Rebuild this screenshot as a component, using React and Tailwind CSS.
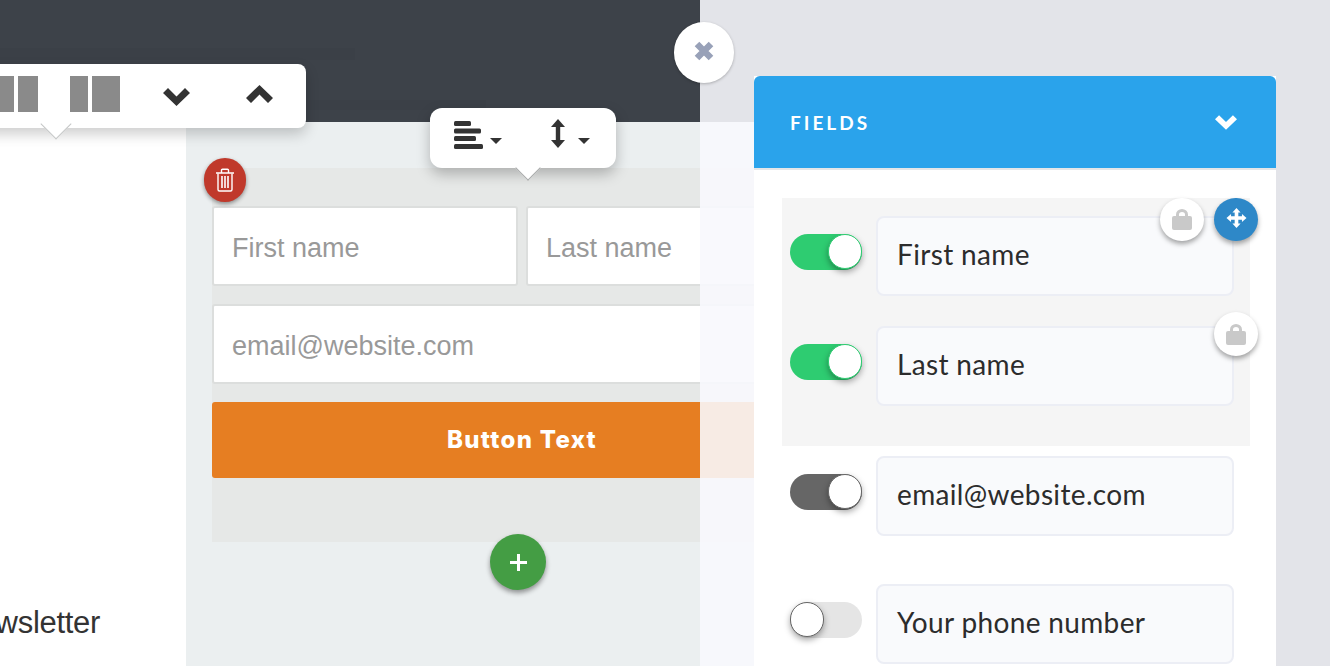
import React from 'react';

const Caret = () => (
  <svg width="12" height="6" viewBox="0 0 12 6" className="fill-[#333]">
    <path d="M0 0h12L6 6z" />
  </svg>
);

const AlignIcon = () => (
  <svg width="29" height="28" viewBox="0 0 29 28" className="fill-[#333]">
    <rect x="0" y="0" width="17" height="5" rx="1.5" />
    <rect x="0" y="7.5" width="27" height="5" rx="1.5" />
    <rect x="0" y="15" width="22" height="5" rx="1.5" />
    <rect x="0" y="23" width="29" height="5" rx="1.5" />
  </svg>
);

const ResizeIcon = () => (
  <svg width="14" height="29" viewBox="0 0 14 29" className="fill-[#333]">
    <path d="M7 0l7 8H9.200v13H14l-7 8-7-8h4.800V8H0z" />
  </svg>
);

const Chevron = ({ up = false, className = '', width = 27, height = 18 }) => (
  <svg width={width} height={height} viewBox="0 0 27 18" className={className}>
    <path d={up ? 'M0 13L13.500 0 27 13l-5 5-8.500-8.500L5 18z' : 'M0 5l5-5 8.500 8.500L22 0l5 5-13.500 13z'} fill="currentColor" />
  </svg>
);

const LockIcon = () => (
  <svg width="20" height="21" viewBox="0 0 20 21">
    <path d="M5.500 8V5.500a4.500 4 0 0 1 9 0V8" fill="none" stroke="#c9c9c9" strokeWidth="3" />
    <rect x="0" y="7" width="20" height="14" rx="2" fill="#c9c9c9" />
  </svg>
);

const MoveIcon = () => (
  <svg width="21" height="20" viewBox="0 0 22 22" className="mb-[3px] fill-white">
    <path d="M11 0l4.500 5H13v4h4V6.500l5 4.500-5 4.500V13h-4v4h2.500L11 22l-4.500-5H9v-4H5v2.500L0 11l5-4.500V9h4V5H6.500z" />
  </svg>
);

const TrashIcon = () => (
  <svg width="20" height="24" viewBox="0 0 20 24" fill="none" stroke="#fff" strokeWidth="1.4">
    <path d="M1 5h18M6.500 5V2.200q0-1 1-1h5q1 0 1 1V5" />
    <path d="M3 5.500v16q0 1.500 1.500 1.500h11q1.500 0 1.500-1.500v-16" />
    <path d="M7 8v12M10 8v12M13 8v12" strokeWidth="1.600" />
  </svg>
);

const Toggle = ({ state }) => {
  const track = state === 'on' ? 'bg-[#2ecc71] justify-end' : state === 'dark' ? 'bg-[#666666] justify-end' : 'bg-[#e5e5e5] justify-start';
  const knob = state === 'on' ? 'border-[#2ecc71]' : 'border-[#666666]';
  return (
    <div className={`mb-2 flex h-9 w-[72px] shrink-0 rounded-full ${track}`}>
      <div className={`h-[35px] w-[34px] rounded-full border bg-white shadow-[0_3px_6px_rgba(0,0,0,0.35)] ${knob}`} />
    </div>
  );
};

const FieldRow = ({ state, label, className = '', children }) => (
  <div className={`flex items-center gap-[14px] ${className}`}>
    <Toggle state={state} />
    <div className="relative flex h-20 w-[358px] items-center rounded-lg border-2 border-[#eceef5] bg-[#f9fafc] pb-[5px] pl-[19px] font-['Lato',sans-serif] text-[28px] tracking-[0.35px] text-[#2c2c2c]">
      {label}
      {children}
    </div>
  </div>
);

const RoundBadge = ({ className, children }) => (
  <div className={`absolute flex w-11 items-center justify-center rounded-full shadow-[0_3px_5px_rgba(0,0,0,0.35)] ${className}`}>
    {children}
  </div>
);

const TextInput = ({ className = '', children }) => (
  <div className={`flex h-20 items-center rounded-[3px] border-2 border-[#dcdedd] bg-white pl-[18px] pt-1 text-[27px] text-[#999] ${className}`}>
    {children}
  </div>
);

export default function App() {
  return (
    <div className="relative h-[666px] w-[1330px] overflow-hidden bg-[#3d4249] font-['Liberation_Sans',Arial,sans-serif]">
      {/* page under the editor */}
      <div className="flex h-full w-[754px] flex-col">
        {/* dark header, the blurred bands are what is left of its text */}
        <div className="h-[122px] shrink-0 pt-12">
          <div className="h-3 w-[355px] bg-black/[0.02]" />
          <div className="mt-10 h-[10px] w-[486px] bg-black/[0.02]" />
        </div>
        <div className="flex min-h-0 flex-1">
          <div className="flex w-[186px] shrink-0 items-end justify-end bg-white pb-[25px] pr-[86px]">
            <span className="whitespace-nowrap text-[31px] leading-9 tracking-[-0.3px] text-[#333]">Newsletter</span>
          </div>
          <div className="min-w-0 flex-1 overflow-hidden bg-[#ebeff0] pl-[26px] pt-[46px]">
            <div className="flex h-[374px] w-[620px] flex-col gap-[18px] bg-[#e6e8e7] pt-[38px]">
              <div className="flex gap-2">
                <TextInput className="w-[306px]">First name</TextInput>
                <TextInput className="w-[306px]">Last name</TextInput>
              </div>
              <TextInput>email@website.com</TextInput>
              <div className="flex h-[76px] items-center justify-center rounded-[3px] bg-[#e67e22] pb-px font-['Inter',sans-serif] text-[24px] font-extrabold tracking-[1.3px] text-white">
                Button Text
              </div>
            </div>
          </div>
        </div>
      </div>

      {/* column toolbar */}
      <div className="absolute left-[-20px] top-16 flex h-16 w-[326px] items-start rounded-lg bg-white pt-3 shadow-[0_6px_14px_rgba(0,0,0,0.2)]">
        <div className="ml-5 flex h-9 gap-1">
          <div className="w-[14px] bg-[#8a8a8a]" />
          <div className="w-5 bg-[#8a8a8a]" />
        </div>
        <div className="ml-8 flex h-9 gap-1">
          <div className="w-[18px] bg-[#8a8a8a]" />
          <div className="w-7 bg-[#8a8a8a]" />
        </div>
        <Chevron className="ml-[43px] mt-3 text-[#333]" />
        <Chevron up className="ml-[56px] mt-[9px] text-[#333]" />
      </div>
      <div className="absolute left-[45px] top-[113px] h-[22px] w-[22px] rotate-45 border-b border-r border-[#c4c6c6] bg-white" />

      {/* align toolbar */}
      <div className="absolute left-[430px] top-[108px] flex h-[60px] w-[186px] items-start rounded-xl bg-white pl-6 pt-[13px] shadow-[0_6px_14px_rgba(0,0,0,0.25)]">
        <AlignIcon />
        <div className="ml-[7px] mt-[17px] flex"><Caret /></div>
        <div className="ml-[49px] mt-[-2px] flex"><ResizeIcon /></div>
        <div className="ml-[13px] mt-[17px] flex"><Caret /></div>
      </div>
      <div className="absolute left-[519px] top-[159px] h-[18px] w-[18px] rotate-45 border-b border-r border-[#a8aaaa] bg-white" />

      <div className="absolute left-[204px] top-[158px] flex h-11 w-[42px] items-center justify-center rounded-full bg-[#c0392b] shadow-[0_2px_4px_rgba(0,0,0,0.4)]">
        <TrashIcon />
      </div>
      <div className="absolute left-[490px] top-[534px] flex h-14 w-14 items-center justify-center rounded-full bg-[#449d44] shadow-[0_3px_5px_rgba(0,0,0,0.4)]">
        <svg width="17" height="17" viewBox="0 0 17 17" className="fill-white">
          <path d="M7 0h3v7h7v3h-7v7H7v-7H0V7h7z" />
        </svg>
      </div>

      {/* editor overlay */}
      <div className="absolute inset-y-0 left-[700px] right-0 bg-[#f8f8fd]/[0.89] pl-[54px] pr-[54px] pt-[76px]">
        <div className="h-full bg-white">
          <div className="flex h-[94px] items-center justify-between rounded-t-md border-b-2 border-[#e4e6e8] bg-[#2aa3eb] pl-9 pr-[39px]">
            <span className="mt-0.5 font-['Lato',sans-serif] text-[19px] font-bold tracking-[3px] text-white">FIELDS</span>
            <Chevron className="text-white" width={22} height={15} />
          </div>
          <div className="pl-7 pt-7">
            <div className="flex h-[248px] w-[468px] flex-col gap-[30px] bg-[#f5f5f5] pl-2 pt-[18px]">
              <FieldRow state="on" label="First name">
                <RoundBadge className="right-[28px] top-[-20px] h-[43px] bg-white">
                  <LockIcon />
                </RoundBadge>
                <RoundBadge className="right-[-26px] top-[-20px] h-[43px] bg-[#2e88c8]">
                  <MoveIcon />
                </RoundBadge>
              </FieldRow>
              <FieldRow state="on" label="Last name">
                <RoundBadge className="right-[-26px] top-[-16px] h-11 bg-white">
                  <LockIcon />
                </RoundBadge>
              </FieldRow>
            </div>
            <FieldRow state="dark" label="email@website.com" className="ml-2 mt-[10px]" />
            <FieldRow state="off" label="Your phone number" className="ml-2 mt-12" />
          </div>
        </div>
      </div>

      <div className="absolute left-[674px] top-[22px] flex h-[61px] w-[60px] items-center justify-center rounded-full bg-white shadow-[0_1px_3px_rgba(0,0,0,0.25)]">
        <svg width="20" height="20" viewBox="0 0 20 20" className="mb-[3px]">
          <path d="M3 3l14 14M17 3L3 17" stroke="#98a1b8" strokeWidth="6.500" />
        </svg>
      </div>
    </div>
  );
}
